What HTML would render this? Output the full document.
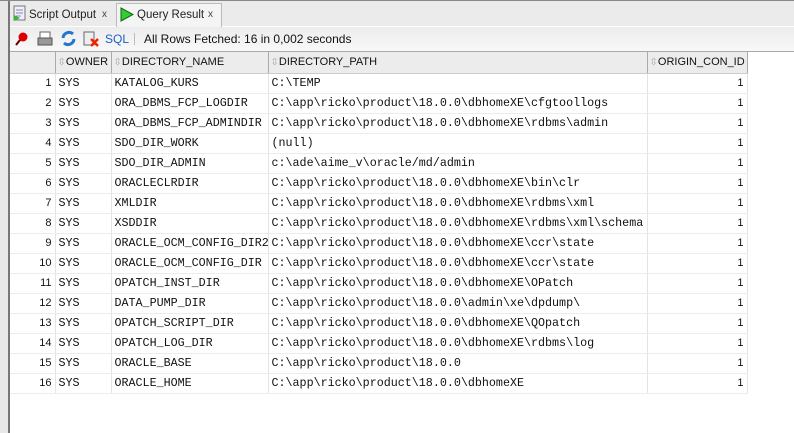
<!DOCTYPE html><html><head><style>
body{margin:0;width:794px;height:433px;background:#fff;position:relative;overflow:hidden;font-family:"Liberation Sans",sans-serif;font-size:11px}
.top{position:absolute;left:0;top:0;width:794px;height:1px;background:#888}
.tabbar{position:absolute;left:10px;top:1px;width:784px;height:25px;background:#ebebeb;border-bottom:1px solid #fff}
.tb{position:absolute;left:10px;top:27px;width:784px;height:24px;background:linear-gradient(#ececec,#f8f8f8);border-bottom:1px solid #aaa}
.lb{position:absolute;left:0;top:0;width:8px;height:433px;background:#e8e8e8}
.lb2{position:absolute;left:8px;top:0;width:2px;height:433px;background:#777}
.tab{position:absolute;top:4px;height:22px;font-size:11.5px;color:#222;line-height:22px}
.x{position:absolute;top:4px;font-size:10px;color:#444;line-height:22px}
table{position:absolute;left:10px;top:52px;border-collapse:collapse;table-layout:fixed;width:737px}
td,th{box-sizing:border-box;height:20px;padding:0 3px;border-right:1px solid #e4e4e4;border-bottom:1px solid #ececec;white-space:nowrap;overflow:hidden}
th{height:21px;background:#ececec;font-weight:normal;text-align:left;border-right:1px solid #aaa;border-bottom:1px solid #ccc;color:#111;font-size:11px;padding:0 2px}
td{font-family:"Liberation Mono",monospace;font-size:11.7px;color:#111}
td.n{text-align:right;font-family:"Liberation Sans",sans-serif;font-size:11px;background:#fff}
.s{color:#aaa;font-size:10px;margin-right:0}
</style></head><body>
<div class="lb"></div><div class="lb2"></div>
<div class="tabbar"></div><div class="top"></div>
<svg style="position:absolute;left:13px;top:5px" width="14" height="17"><rect x="1" y="1" width="11" height="14" fill="#eef" stroke="#777"/><path d="M3 5h7M3 8h7M3 11h5" stroke="#88a"/><path d="M1 10L7 13L1 16Z" fill="#3b3"/></svg>
<div class="tab" style="left:29px">Script Output</div><div class="x" style="left:102px">x</div>
<div style="position:absolute;left:116px;top:3px;width:104px;height:24px;background:#f4f4f4;border:1px solid #bbb;border-bottom:none"></div>
<svg style="position:absolute;left:120px;top:7px" width="14" height="15"><path d="M1 1L13 7.5L1 14Z" fill="#3c3" stroke="#161"/></svg>
<div class="tab" style="left:137px">Query Result</div><div class="x" style="left:208px">x</div>
<div class="tb"></div>
<svg style="position:absolute;left:14px;top:31px" width="16" height="16"><circle cx="9" cy="6" r="4.5" fill="#d00"/><path d="M6 9L2 14" stroke="#600" stroke-width="2"/></svg>
<svg style="position:absolute;left:37px;top:31px" width="16" height="16"><rect x="3" y="1" width="10" height="6" fill="#fff" stroke="#666"/><rect x="1" y="7" width="14" height="7" fill="#999" stroke="#555"/></svg>
<svg style="position:absolute;left:60px;top:30px" width="17" height="17"><path d="M3 8a6 6 0 0 1 10-4M14 9a6 6 0 0 1-10 4" stroke="#27c" stroke-width="3" fill="none"/></svg>
<svg style="position:absolute;left:83px;top:31px" width="16" height="16"><rect x="1" y="1" width="10" height="13" fill="#eee" stroke="#667"/><path d="M8 8l7 7M15 8l-7 7" stroke="#e20" stroke-width="2.5"/></svg>
<div style="position:absolute;left:105px;top:32px;color:#1a5fc9;font-size:12px">SQL</div>
<div style="position:absolute;left:134px;top:33px;width:1px;height:12px;background:#bbb"></div>
<div style="position:absolute;left:144px;top:32px;font-size:12px;color:#111">All Rows Fetched: 16 in 0,002 seconds</div>
<table>
<colgroup><col style="width:45px"><col style="width:56px"><col style="width:157px"><col style="width:379px"><col style="width:100px"></colgroup>
<tr><th style="border-right:1px solid #aaa"></th><th><span class="s">⇳</span>OWNER</th><th><span class="s">⇳</span>DIRECTORY_NAME</th><th><span class="s">⇳</span>DIRECTORY_PATH</th><th><span class="s">⇳</span>ORIGIN_CON_ID</th></tr>
<tr><td class="n">1</td><td>SYS</td><td>KATALOG_KURS</td><td>C:\TEMP</td><td class="n">1</td></tr>
<tr><td class="n">2</td><td>SYS</td><td>ORA_DBMS_FCP_LOGDIR</td><td>C:\app\ricko\product\18.0.0\dbhomeXE\cfgtoollogs</td><td class="n">1</td></tr>
<tr><td class="n">3</td><td>SYS</td><td>ORA_DBMS_FCP_ADMINDIR</td><td>C:\app\ricko\product\18.0.0\dbhomeXE\rdbms\admin</td><td class="n">1</td></tr>
<tr><td class="n">4</td><td>SYS</td><td>SDO_DIR_WORK</td><td>(null)</td><td class="n">1</td></tr>
<tr><td class="n">5</td><td>SYS</td><td>SDO_DIR_ADMIN</td><td>c:\ade\aime_v\oracle/md/admin</td><td class="n">1</td></tr>
<tr><td class="n">6</td><td>SYS</td><td>ORACLECLRDIR</td><td>C:\app\ricko\product\18.0.0\dbhomeXE\bin\clr</td><td class="n">1</td></tr>
<tr><td class="n">7</td><td>SYS</td><td>XMLDIR</td><td>C:\app\ricko\product\18.0.0\dbhomeXE\rdbms\xml</td><td class="n">1</td></tr>
<tr><td class="n">8</td><td>SYS</td><td>XSDDIR</td><td>C:\app\ricko\product\18.0.0\dbhomeXE\rdbms\xml\schema</td><td class="n">1</td></tr>
<tr><td class="n">9</td><td>SYS</td><td>ORACLE_OCM_CONFIG_DIR2</td><td>C:\app\ricko\product\18.0.0\dbhomeXE\ccr\state</td><td class="n">1</td></tr>
<tr><td class="n">10</td><td>SYS</td><td>ORACLE_OCM_CONFIG_DIR</td><td>C:\app\ricko\product\18.0.0\dbhomeXE\ccr\state</td><td class="n">1</td></tr>
<tr><td class="n">11</td><td>SYS</td><td>OPATCH_INST_DIR</td><td>C:\app\ricko\product\18.0.0\dbhomeXE\OPatch</td><td class="n">1</td></tr>
<tr><td class="n">12</td><td>SYS</td><td>DATA_PUMP_DIR</td><td>C:\app\ricko\product\18.0.0\admin\xe\dpdump\</td><td class="n">1</td></tr>
<tr><td class="n">13</td><td>SYS</td><td>OPATCH_SCRIPT_DIR</td><td>C:\app\ricko\product\18.0.0\dbhomeXE\QOpatch</td><td class="n">1</td></tr>
<tr><td class="n">14</td><td>SYS</td><td>OPATCH_LOG_DIR</td><td>C:\app\ricko\product\18.0.0\dbhomeXE\rdbms\log</td><td class="n">1</td></tr>
<tr><td class="n">15</td><td>SYS</td><td>ORACLE_BASE</td><td>C:\app\ricko\product\18.0.0</td><td class="n">1</td></tr>
<tr><td class="n">16</td><td>SYS</td><td>ORACLE_HOME</td><td>C:\app\ricko\product\18.0.0\dbhomeXE</td><td class="n">1</td></tr>
</table>
</body></html>
